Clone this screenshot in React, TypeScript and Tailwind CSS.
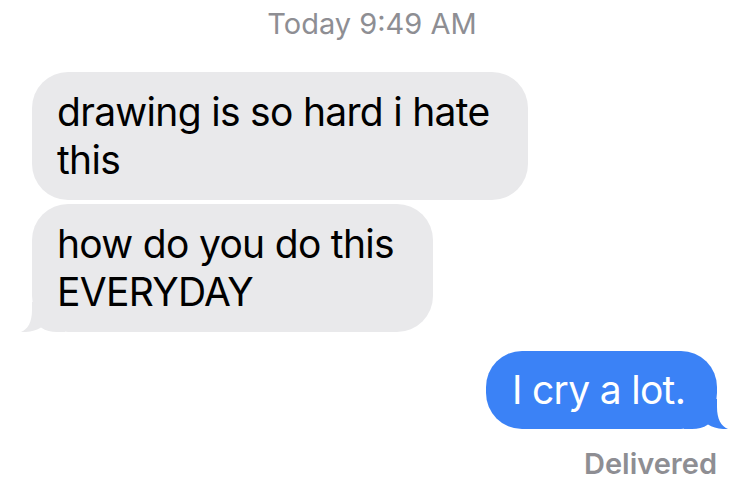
import React from 'react';

const font = { fontFamily: 'Inter, "Noto Sans", sans-serif' };

function Tail({ side, color }: { side: 'left' | 'right'; color: string }) {
  return (
    <svg
      width="44"
      height="30"
      viewBox="0 0 44 30"
      className={
        side === 'left'
          ? 'absolute bottom-0 left-[-11px]'
          : 'absolute bottom-0 right-[-11px] -scale-x-100'
      }>
      <path
        d="M11 0 L11 8 C11 20 7 27 0 30 C8 30.5 15 28.5 20 25.5 C25 29 30 30 36 30 L44 30 L44 0 Z"
        fill={color}
      />
    </svg>
  );
}

const App = () => {
  return (
    <main
      className="flex h-[495px] w-[744px] flex-col overflow-hidden bg-white antialiased"
      style={font}>
      <div className="pt-[6px] text-center text-[29px] leading-[36px] text-[#8e8e93]">
        Today 9:49 AM
      </div>

      <div className="mt-[30px] flex flex-col gap-[4px] pl-[32px]">
        <div className="relative w-[496px] rounded-[36px] bg-[#e9e9eb] px-[25px] py-[16px] text-[39px] leading-[48px] tracking-[-0.7px] text-black">
          drawing is so hard i hate this
        </div>
        <div className="relative w-[401px] rounded-[36px] bg-[#e9e9eb] px-[25px] py-[16px] text-[39px] leading-[48px] tracking-[-0.7px] text-black">
          <Tail side="left" color="#e9e9eb" />
          <span className="relative">how do you do this EVERYDAY</span>
        </div>
      </div>

      <div className="mt-[19px] flex flex-col items-end pr-[27px]">
        <div className="relative w-[231px] whitespace-nowrap rounded-[36px] bg-[#3b82f6] px-[26px] py-[15px] text-[39px] leading-[48px] tracking-[-0.7px] text-white">
          <Tail side="right" color="#3b82f6" />
          <span className="relative">I cry a lot.</span>
        </div>
        <div className="mt-[17px] text-[29px] font-semibold leading-[36px] text-[#8e8e93]">
          Delivered
        </div>
      </div>
    </main>
  );
};

export default App;
